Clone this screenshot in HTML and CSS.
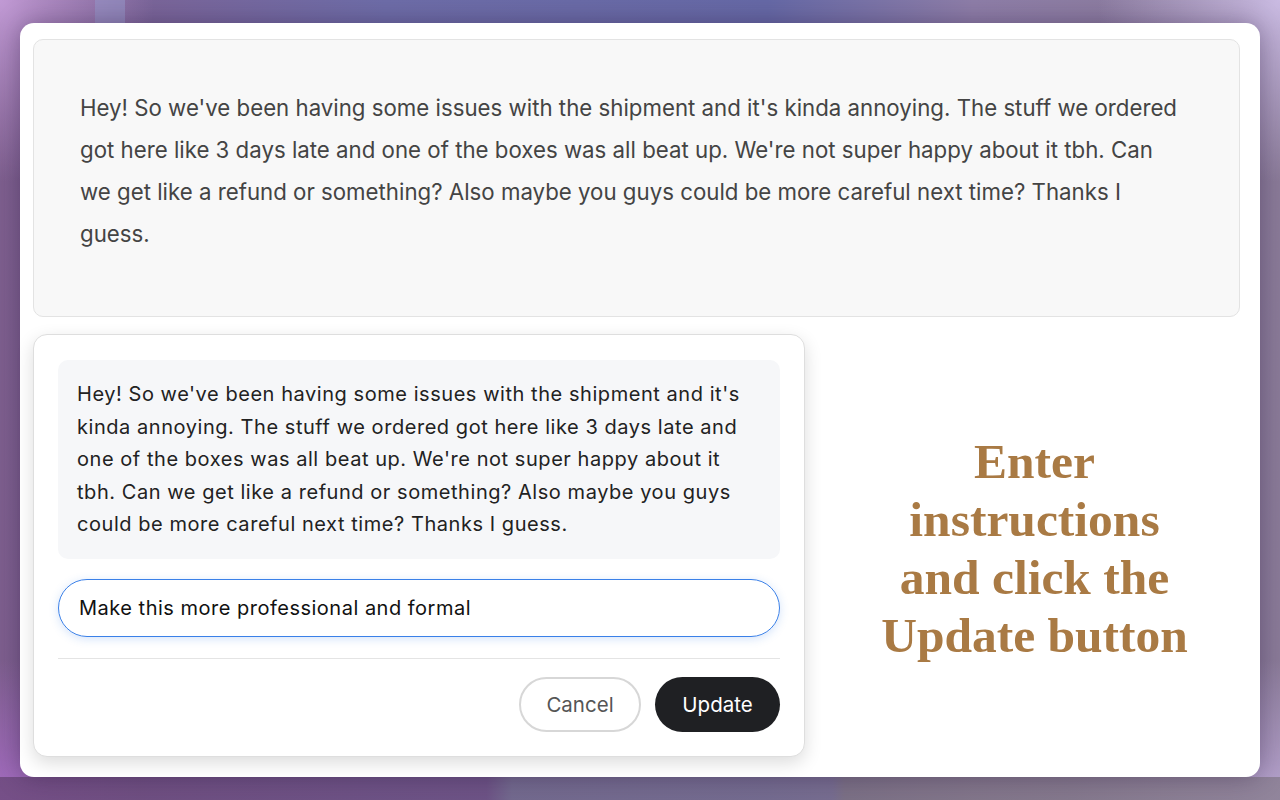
FILE: index.html
```html
<!DOCTYPE html>
<html>
<head>
<meta charset="utf-8">
<link rel="stylesheet" href="styles.css">
</head>
<body>
<div class="desktop">
  <div class="bg-blob blob-a"></div>
  <div class="bg-blob blob-b"></div>
  <div class="window">
    <div class="source">
      <p>Hey! So we've been having some issues with the shipment and it's kinda annoying. The stuff we ordered got here like 3 days late and one of the boxes was all beat up. We're not super happy about it tbh. Can we get like a refund or something? Also maybe you guys could be more careful next time? Thanks I guess.</p>
    </div>
    <div class="lower">
      <div class="popup">
        <div class="preview">Hey! So we've been having some issues with the shipment and it's kinda annoying. The stuff we ordered got here like 3 days late and one of the boxes was all beat up. We're not super happy about it tbh. Can we get like a refund or something? Also maybe you guys could be more careful next time? Thanks I guess.</div>
        <div class="input">Make this more professional and formal</div>
        <div class="divider"></div>
        <div class="actions">
          <button class="btn btn-cancel">Cancel</button>
          <button class="btn btn-update">Update</button>
        </div>
      </div>
      <div class="hint">
        <h1>Enter instructions and click the Update button</h1>
      </div>
    </div>
  </div>
</div>
</body>
</html>
```

FILE: styles.css
```css
* { box-sizing: border-box; }
html, body { margin: 0; padding: 0; }
body {
  width: 1280px;
  height: 800px;
  overflow: hidden;
  font-family: Inter, "Liberation Sans", Arial, sans-serif;
}
.desktop {
  position: relative;
  width: 1280px;
  height: 800px;
  padding: 23px 20px 23px 20px;
  background:
    radial-gradient(ellipse 220px 260px at 0px 0px, rgba(200,160,220,0.9), rgba(200,160,220,0) 70%),
    radial-gradient(ellipse 260px 260px at 1280px 0px, rgba(205,190,230,0.95), rgba(205,190,230,0) 70%),
    radial-gradient(ellipse 200px 200px at 0px 800px, rgba(170,110,200,0.9), rgba(170,110,200,0) 70%),
    radial-gradient(ellipse 300px 200px at 1280px 800px, rgba(190,170,215,0.9), rgba(190,170,215,0) 70%),
    linear-gradient(90deg, #7e5f8e 0%, #7c6497 9%, #6e6da8 30%, #6669a6 60%, #8e7ea8 76%, #8a7b98 100%);
}
.bg-blob { position: absolute; pointer-events: none; }
.blob-a {
  left: 95px; top: 0; width: 30px; height: 24px;
  background: rgba(150,150,200,0.6);
}
.blob-b {
  left: 0; top: 777px; width: 1280px; height: 23px;
  background: linear-gradient(90deg, #6d4a7d 0%, #6e4f80 38%, #756a8a 40%, #786d8c 65%, #7d7180 66%, #8a7f92 100%);
  opacity: 0.85;
}
.window {
  position: relative;
  height: 754px;
  background: #fff;
  border-radius: 14px;
  padding: 16px 20px 0 13px;
  box-shadow: 0 0 26px rgba(40,20,60,0.4);
}
.source {
  height: 278px;
  background: #f8f8f8;
  border: 1px solid #e3e3e3;
  border-radius: 10px;
  padding: 47px 50px 47px 46px;
}
.source p {
  margin: 0;
  font-size: 22.25px;
  line-height: 42px;
  color: #444;
}
.lower {
  display: flex;
  margin-top: 17px;
}
.popup {
  width: 772px;
  flex: none;
  background: #fff;
  border: 1px solid #dedede;
  border-radius: 14px;
  padding: 25px 24px 24px 24px;
  box-shadow: 0 6px 18px rgba(0,0,0,0.14);
}
.preview {
  background: #f6f7f9;
  border-radius: 10px;
  padding: 18px 19px 18px 19px;
  font-size: 20px;
  letter-spacing: 0.55px;
  line-height: 32.6px;
  color: #222;
}
.input {
  margin-top: 20px;
  height: 58px;
  border: 1.5px solid #3a80e8;
  border-radius: 29px;
  padding: 0 20px;
  display: flex;
  align-items: center;
  font-size: 20px;
  letter-spacing: 0.5px;
  color: #111;
  box-shadow: 0 2px 10px rgba(58,128,232,0.22);
}
.divider {
  margin-top: 21px;
  height: 1px;
  background: #e4e4e4;
}
.actions {
  margin-top: 18px;
  display: flex;
  justify-content: flex-end;
  gap: 14px;
}
.btn {
  height: 55px;
  border-radius: 28px;
  font-family: Inter, "Liberation Sans", Arial, sans-serif;
  font-size: 20.5px;
  padding: 0;
  cursor: pointer;
}
.btn-cancel {
  width: 122px;
  background: #fff;
  border: 2px solid #d7d7d7;
  color: #555;
}
.btn-update {
  width: 125px;
  background: #1f2023;
  border: none;
  color: #fff;
}
.hint {
  flex: 1;
  display: flex;
  align-items: center;
  justify-content: center;
  padding: 7px 0 0 24px;
}
.hint h1 {
  margin: 0;
  width: 330px;
  text-align: center;
  font-family: "Liberation Serif", "Times New Roman", serif;
  font-weight: bold;
  font-size: 49.5px;
  line-height: 58px;
  color: #a97a44;
}
```
